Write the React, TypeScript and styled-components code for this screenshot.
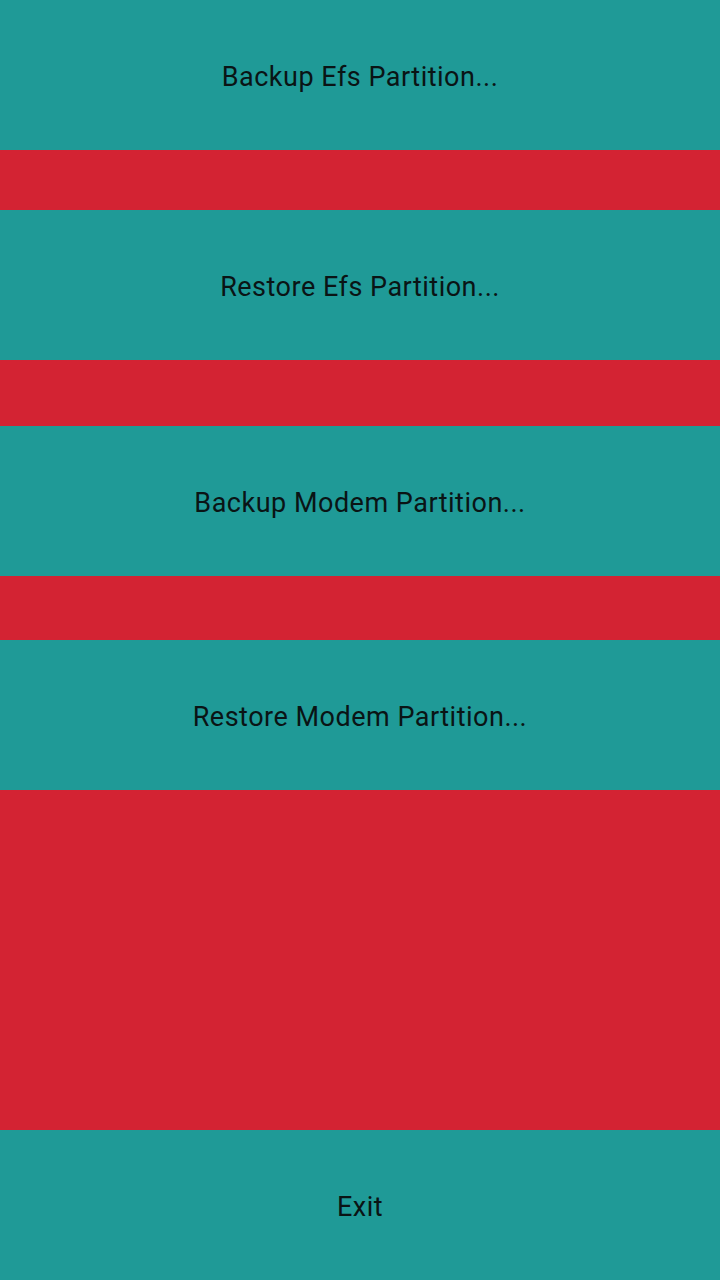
import React from 'react';
import styled, { createGlobalStyle } from 'styled-components';

const GlobalStyle = createGlobalStyle`
  html, body {
    margin: 0;
    padding: 0;
    background: #d32333;
  }
  #root {
    height: 1280px;
  }
`;

const Screen = styled.div`
  display: flex;
  flex-direction: column;
  width: 720px;
  height: 1280px;
  background: #d32333;
  font-family: Roboto, "Noto Sans", sans-serif;
`;

const ActionButton = styled.button`
  display: flex;
  align-items: center;
  justify-content: center;
  flex: 0 0 150px;
  width: 100%;
  margin: 0;
  padding: 4px 0 0;
  border: none;
  background: #1f9a97;
  color: #0a1415;
  font-family: inherit;
  font-size: 27px;
  letter-spacing: 0.5px;
  cursor: pointer;
`;

const Gap = styled.div<{ $h: number }>`
  flex: 0 0 ${(p) => p.$h}px;
  background: #d32333;
`;

const Filler = styled.div`
  flex: 1;
  background: #d32333;
`;

export default function App() {
  return (
    <>
      <GlobalStyle />
      <Screen>
        <ActionButton>Backup Efs Partition...</ActionButton>
        <Gap $h={60} />
        <ActionButton>Restore Efs Partition...</ActionButton>
        <Gap $h={66} />
        <ActionButton>Backup Modem Partition...</ActionButton>
        <Gap $h={64} />
        <ActionButton>Restore Modem Partition...</ActionButton>
        <Filler />
        <ActionButton>Exit</ActionButton>
      </Screen>
    </>
  );
}
